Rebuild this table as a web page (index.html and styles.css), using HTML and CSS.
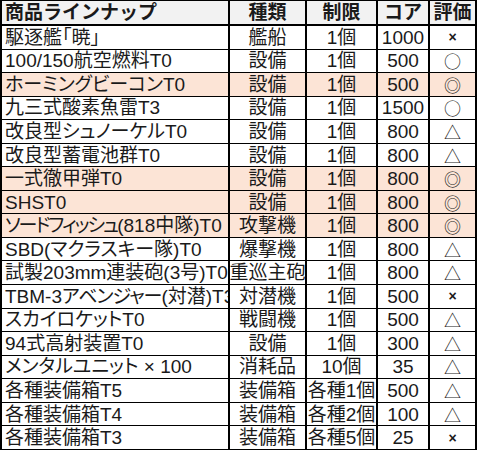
FILE: index.html
```html
<!DOCTYPE html>
<html lang="ja">
<head>
<meta charset="utf-8">
<title>商品ラインナップ</title>
<link rel="stylesheet" href="styles.css">
</head>
<body>
<div class="sheet">
  <div class="c h name">商品ラインナップ</div><div class="c h">種類</div><div class="c h">制限</div><div class="c h">コア</div><div class="c h">評価</div>

  <div class="c name">駆逐艦「暁」</div><div class="c">艦船</div><div class="c">1個</div><div class="c">1000</div><div class="c mark x">×</div>
  <div class="c name">100/150航空燃料T0</div><div class="c">設備</div><div class="c">1個</div><div class="c">500</div><div class="c mark">○</div>
  <div class="c name hl">ホーミングビーコンT0</div><div class="c hl">設備</div><div class="c hl">1個</div><div class="c hl">500</div><div class="c mark hl">◎</div>
  <div class="c name">九三式酸素魚雷T3</div><div class="c">設備</div><div class="c">1個</div><div class="c">1500</div><div class="c mark">○</div>
  <div class="c name">改良型シュノーケルT0</div><div class="c">設備</div><div class="c">1個</div><div class="c">800</div><div class="c mark">△</div>
  <div class="c name">改良型蓄電池群T0</div><div class="c">設備</div><div class="c">1個</div><div class="c">800</div><div class="c mark">△</div>
  <div class="c name hl">一式徹甲弾T0</div><div class="c hl">設備</div><div class="c hl">1個</div><div class="c hl">800</div><div class="c mark hl">◎</div>
  <div class="c name hl">SHST0</div><div class="c hl">設備</div><div class="c hl">1個</div><div class="c hl">800</div><div class="c mark hl">◎</div>
  <div class="c name hl"><span class="tight">ソードフィッシュ</span>(818中隊)T0</div><div class="c hl">攻撃機</div><div class="c hl">1個</div><div class="c hl">800</div><div class="c mark hl">◎</div>
  <div class="c name">SBD(マクラスキー隊)T0</div><div class="c">爆撃機</div><div class="c">1個</div><div class="c">800</div><div class="c mark">△</div>
  <div class="c name">試製203mm連装砲(3号)T0</div><div class="c">重巡主砲</div><div class="c">1個</div><div class="c">800</div><div class="c mark">△</div>
  <div class="c name">TBM-3<span class="snug">アベンジャー</span>(対潜)T3</div><div class="c">対潜機</div><div class="c">1個</div><div class="c">500</div><div class="c mark x">×</div>
  <div class="c name">スカイロケットT0</div><div class="c">戦闘機</div><div class="c">1個</div><div class="c">500</div><div class="c mark">△</div>
  <div class="c name">94式高射装置T0</div><div class="c">設備</div><div class="c">1個</div><div class="c">300</div><div class="c mark">△</div>
  <div class="c name">メンタルユニット × 100</div><div class="c">消耗品</div><div class="c">10個</div><div class="c">35</div><div class="c mark">△</div>
  <div class="c name">各種装備箱T5</div><div class="c">装備箱</div><div class="c">各種1個</div><div class="c">500</div><div class="c mark">△</div>
  <div class="c name">各種装備箱T4</div><div class="c">装備箱</div><div class="c">各種2個</div><div class="c">100</div><div class="c mark">△</div>
  <div class="c name">各種装備箱T3</div><div class="c">装備箱</div><div class="c">各種5個</div><div class="c">25</div><div class="c mark x">×</div>
</div>
</body>
</html>
```
FILE: styles.css
```css
html, body {
  margin: 0;
  padding: 0;
  background: #ffffff;
}
.sheet {
  width: 477px;
  box-sizing: border-box;
  display: grid;
  grid-template-columns: 228px 77px 71px 52px 47px;
  grid-template-rows: 25px repeat(18, 23.55px);
  border-top: 1px solid #000;
  border-left: 2px solid #000;
  font-family: "Liberation Sans", "Noto Sans CJK JP", sans-serif;
  font-size: 19px;
  color: #1a1a1a;
}
.c {
  border-right: 2px solid #000;
  border-bottom: 1px solid #000;
  display: flex;
  align-items: center;
  justify-content: center;
  white-space: nowrap;
  line-height: 1;
  min-width: 0;
}
.name {
  justify-content: flex-start;
  padding-left: 3px;
  overflow: hidden;
  font-feature-settings: "palt";
}
.tight {
  letter-spacing: -2px;
}
.snug {
  letter-spacing: -1px;
}
.h {
  background: #f2f2f2;
  font-weight: bold;
  border-bottom: 2px solid #000;
  font-feature-settings: normal;
}
.hl {
  background: #fce4d6;
}
.mark {
  font-family: "Noto Sans CJK JP", sans-serif;
  font-size: 17px;
}
.mark.x {
  font-family: "Liberation Sans", sans-serif;
  font-weight: bold;
  font-size: 14px;
}
```
